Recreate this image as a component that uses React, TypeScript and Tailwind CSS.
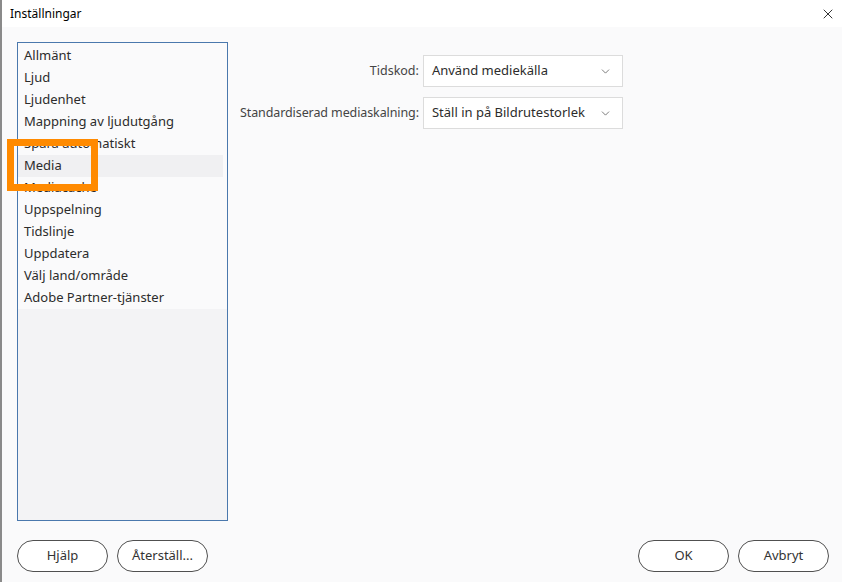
import { ChevronDown, X } from 'lucide-react'

const items = [
  'Allmänt',
  'Ljud',
  'Ljudenhet',
  'Mappning av ljudutgång',
  'Spara automatiskt',
  'Media',
  'Mediacache',
  'Uppspelning',
  'Tidslinje',
  'Uppdatera',
  'Välj land/område',
  'Adobe Partner-tjänster',
]

function Select({ value }: { value: string }) {
  return (
    <div className="flex h-[32px] w-[200px] items-center justify-between border border-[#dcdcdc] bg-white pl-[8px] pr-[10px] text-[13px] text-[#2c2c2c]">
      <span>{value}</span>
      <ChevronDown size={13} strokeWidth={1.4} className="text-[#555]" />
    </div>
  )
}

function Btn({ label }: { label: string }) {
  return (
    <button className="flex h-[32px] w-[91px] items-center justify-center rounded-full border border-[#505050] bg-white text-[13px] text-[#333]">
      {label}
    </button>
  )
}

export default function App() {
  return (
    <div
      className="flex h-[582px] w-[842px] flex-col border-l-2 border-[#8a8a8a] bg-[#fafafb]"
      style={{ fontFamily: '"Noto Sans", "Open Sans", sans-serif' }}
    >
      <div className="flex h-[28px] items-center justify-between bg-white pl-[8px] pr-[6px] text-[12px] text-black">
        <span>Inställningar</span>
        <X size={16} strokeWidth={1.2} />
      </div>

      <div className="flex flex-1 pl-[15px] pt-[15px]">
        <div className="relative flex h-[479px] w-[211px] flex-col border border-[#4a78ad] bg-[#f3f3f5]">
          <div className="flex flex-col bg-[#fafafb] pt-[2px]">
            {items.map((it) => (
              <div
                key={it}
                className={
                  'flex h-[22px] items-center pl-[6px] text-[13px] text-[#2c2c2c] ' +
                  (it === 'Media' ? 'mr-[4px] bg-[#f0f0f2]' : '')
                }
              >
                {it}
              </div>
            ))}
          </div>
          <div className="absolute left-[-11px] top-[96px] h-[52px] w-[91px] border-[7px] border-[#ff8a00]" />
        </div>

        <div className="ml-[12px] grid h-fit grid-cols-[auto_auto] items-center gap-x-[4px] gap-y-[10px] pt-[13px]">
          <span className="whitespace-nowrap text-right text-[12.5px] text-[#444]">Tidskod:</span>
          <Select value="Använd mediekälla" />
          <span className="whitespace-nowrap text-right text-[12.5px] tracking-[-0.1px] text-[#444]">
            Standardiserad mediaskalning:
          </span>
          <Select value="Ställ in på Bildrutestorlek" />
        </div>
      </div>

      <div className="flex items-center justify-between pb-[10px] pl-[15px] pr-[13px] pt-[19px]">
        <div className="flex gap-[9px]">
          <Btn label="Hjälp" />
          <Btn label="Återställ..." />
        </div>
        <div className="flex gap-[9px]">
          <Btn label="OK" />
          <Btn label="Avbryt" />
        </div>
      </div>
    </div>
  )
}
